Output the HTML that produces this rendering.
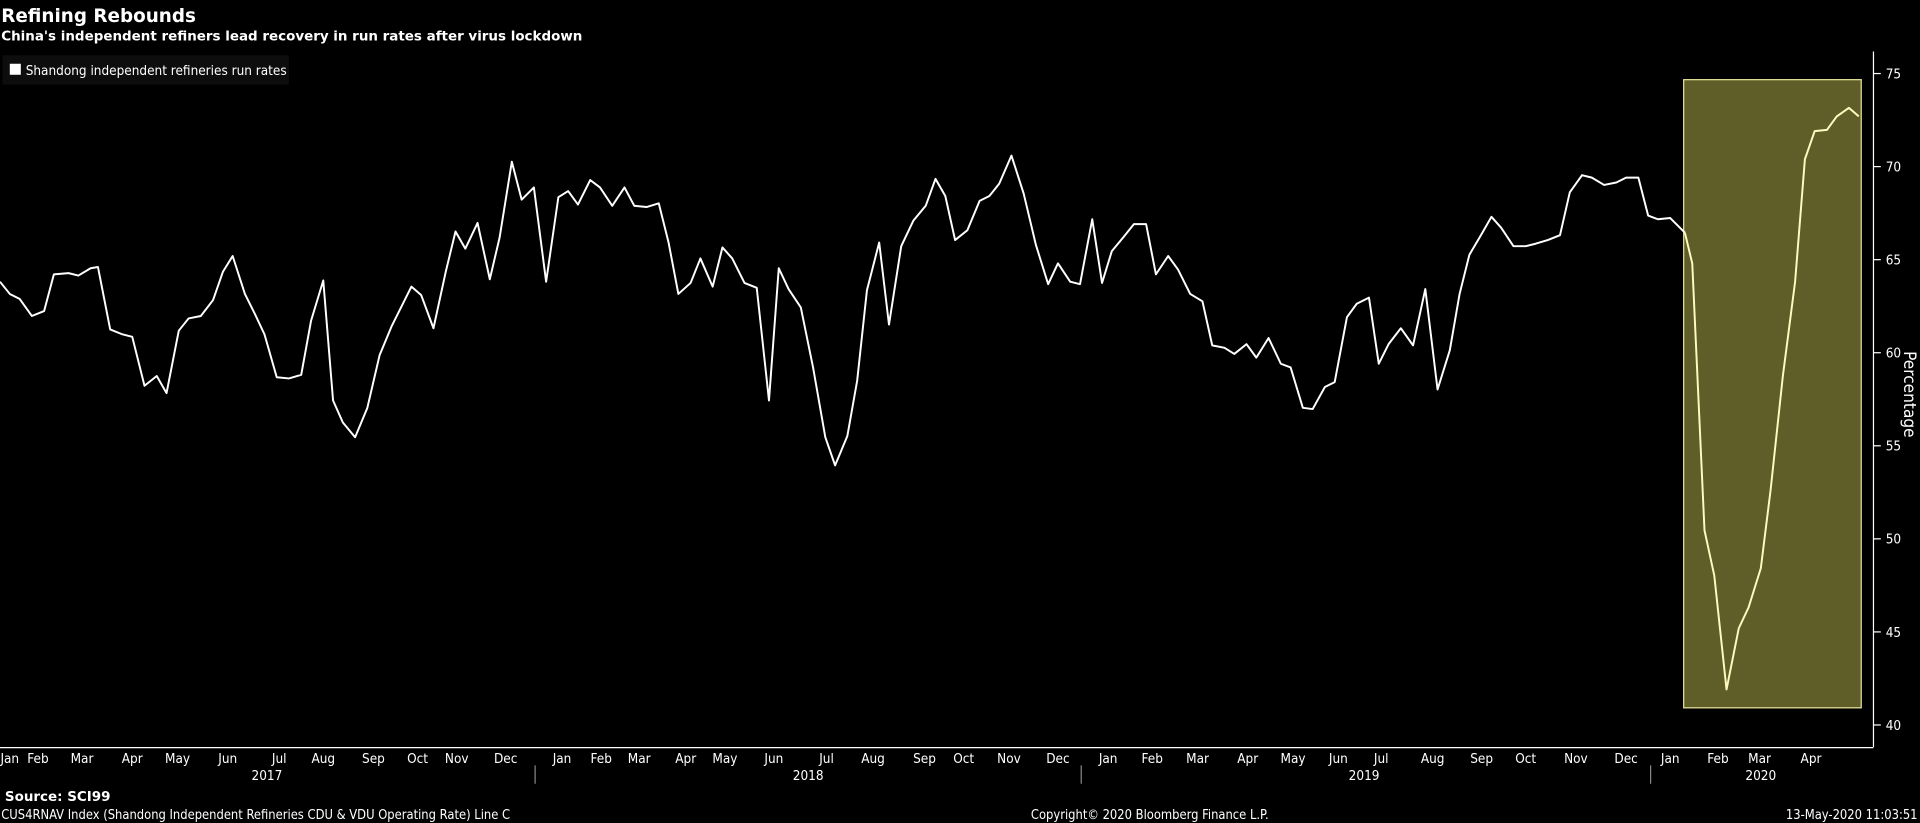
<!DOCTYPE html>
<html><head><meta charset="utf-8"><style>html,body{margin:0;padding:0;background:#000;width:1920px;height:823px;overflow:hidden}svg{display:block}text{font-family:"DejaVu Sans Condensed","Liberation Sans",sans-serif;fill:#fff}</style></head><body>
<svg width="1920" height="823" viewBox="0 0 1568 672" xmlns="http://www.w3.org/2000/svg">
<rect width="1568" height="672" fill="#000"/>
<text x="1" y="18" font-size="15" font-weight="bold" style="font-family:'DejaVu Sans','Liberation Sans',sans-serif">Refining Rebounds</text>
<text x="1" y="33" font-size="11" font-weight="bold" style="font-family:'DejaVu Sans','Liberation Sans',sans-serif">China's independent refiners lead recovery in run rates after virus lockdown</text>
<rect x="2" y="45" width="234" height="24" fill="#0d0d0d"/>
<rect x="8" y="52" width="9" height="9" fill="#fff"/>
<text x="21" y="61" font-size="11">Shandong independent refineries run rates</text>
<rect x="1375" y="65" width="145" height="513" fill="#5f5e28" stroke="#e8e59a" stroke-width="1"/>
<polyline fill="none" stroke="#fff" stroke-width="1.6" stroke-linejoin="round" points="0,230 8,240 16,244 26,258 36,254 44,224 56,223 64,225 74,219 80,218 90,269 100,273 108,275 118,315 128,307 136,321 146,270 154,260 164,258 174,245 182,222 190,209 200,240 208,256 216,273 226,308 236,309 246,306 254,262 264,229 272,327 280,345 290,357 300,333 310,290 320,266 330,246 336,234 344,241 354,268 364,222 372,189 380,203 390,182 400,228 408,194 418,132 426,163 436,153 446,230 456,161 464,156 472,167 482,147 490,153 500,168 510,153 518,168 528,169 538,166 546,198 554,240 564,231 572,211 582,234 590,202 598,211 608,231 618,235 628,327 636,219 644,236 654,251 664,300 674,357 682,380 692,356 700,311 708,237 718,198 726,265 736,201 746,180 756,168 764,146 772,160 780,196 790,188 800,164 808,160 816,150 826,127 836,158 846,200 856,232 864,215 874,230 882,232 892,179 900,231 908,205 918,193 926,183 936,183 944,224 954,209 962,220 972,240 982,246 990,282 1000,284 1008,289 1018,281 1026,292 1036,276 1046,297 1054,300 1064,333 1072,334 1082,316 1090,312 1100,259 1108,248 1118,243 1126,297 1134,281 1144,268 1154,282 1164,236 1174,318 1184,286 1192,240 1200,208 1210,191 1218,177 1226,186 1236,201 1246,201 1254,199 1264,196 1274,192 1282,157 1292,143 1300,145 1310,151 1320,149 1328,145 1338,145 1346,176 1354,179 1364,178 1372,186 1376,190"/>
<polyline fill="none" stroke="#fffbc0" stroke-width="1.6" stroke-linejoin="round" points="1376,190 1382,215 1392,433 1400,470 1410,563 1420,513 1428,496 1438,464 1446,400 1456,307 1466,230 1474,130 1482,107 1492,106 1500,95 1510,88 1518,95"/>
<line x1="1530" y1="42" x2="1530" y2="610" stroke="#fff"/>
<line x1="0" y1="610.5" x2="1530" y2="610.5" stroke="#fff"/>
<g stroke="#fff"><line x1="1530" y1="60" x2="1536" y2="60"/><line x1="1530" y1="136" x2="1536" y2="136"/><line x1="1530" y1="212" x2="1536" y2="212"/><line x1="1530" y1="288" x2="1536" y2="288"/><line x1="1530" y1="364" x2="1536" y2="364"/><line x1="1530" y1="440" x2="1536" y2="440"/><line x1="1530" y1="516" x2="1536" y2="516"/><line x1="1530" y1="592" x2="1536" y2="592"/>
<line x1="437" y1="625" x2="437" y2="640" stroke="#888"/><line x1="883" y1="625" x2="883" y2="640" stroke="#888"/><line x1="1348" y1="625" x2="1348" y2="640" stroke="#888"/></g>
<g font-size="11"><text x="1540" y="64">75</text><text x="1540" y="140">70</text><text x="1540" y="216">65</text><text x="1540" y="292">60</text><text x="1540" y="368">55</text><text x="1540" y="444">50</text><text x="1540" y="520">45</text><text x="1540" y="596">40</text></g>
<text transform="translate(1555,322) rotate(90)" font-size="14" text-anchor="middle">Percentage</text>
<g font-size="11" text-anchor="middle">
<text x="8" y="623">Jan</text><text x="31" y="623">Feb</text><text x="67" y="623">Mar</text><text x="108" y="623">Apr</text><text x="145" y="623">May</text><text x="186" y="623">Jun</text><text x="228" y="623">Jul</text><text x="264" y="623">Aug</text><text x="305" y="623">Sep</text><text x="341" y="623">Oct</text><text x="373" y="623">Nov</text><text x="413" y="623">Dec</text>
<text x="459" y="623">Jan</text><text x="491" y="623">Feb</text><text x="522" y="623">Mar</text><text x="560" y="623">Apr</text><text x="592" y="623">May</text><text x="632" y="623">Jun</text><text x="675" y="623">Jul</text><text x="713" y="623">Aug</text><text x="755" y="623">Sep</text><text x="787" y="623">Oct</text><text x="824" y="623">Nov</text><text x="864" y="623">Dec</text>
<text x="905" y="623">Jan</text><text x="941" y="623">Feb</text><text x="978" y="623">Mar</text><text x="1019" y="623">Apr</text><text x="1056" y="623">May</text><text x="1093" y="623">Jun</text><text x="1128" y="623">Jul</text><text x="1170" y="623">Aug</text><text x="1210" y="623">Sep</text><text x="1246" y="623">Oct</text><text x="1287" y="623">Nov</text><text x="1328" y="623">Dec</text>
<text x="1364" y="623">Jan</text><text x="1403" y="623">Feb</text><text x="1437" y="623">Mar</text><text x="1479" y="623">Apr</text>
<text x="218" y="637">2017</text><text x="660" y="637">2018</text><text x="1114" y="637">2019</text><text x="1438" y="637">2020</text></g>
<text x="4" y="654" font-size="11" font-weight="bold" style="font-family:'DejaVu Sans','Liberation Sans',sans-serif">Source: SCI99</text>
<text x="1" y="669" font-size="10.5">CUS4RNAV Index (Shandong Independent Refineries CDU &amp; VDU Operating Rate) Line C</text>
<text x="939" y="669" font-size="10.5" text-anchor="middle">Copyright© 2020 Bloomberg Finance L.P.</text>
<text x="1566" y="669" font-size="10.5" text-anchor="end">13-May-2020 11:03:51</text>
</svg>
</body></html>
